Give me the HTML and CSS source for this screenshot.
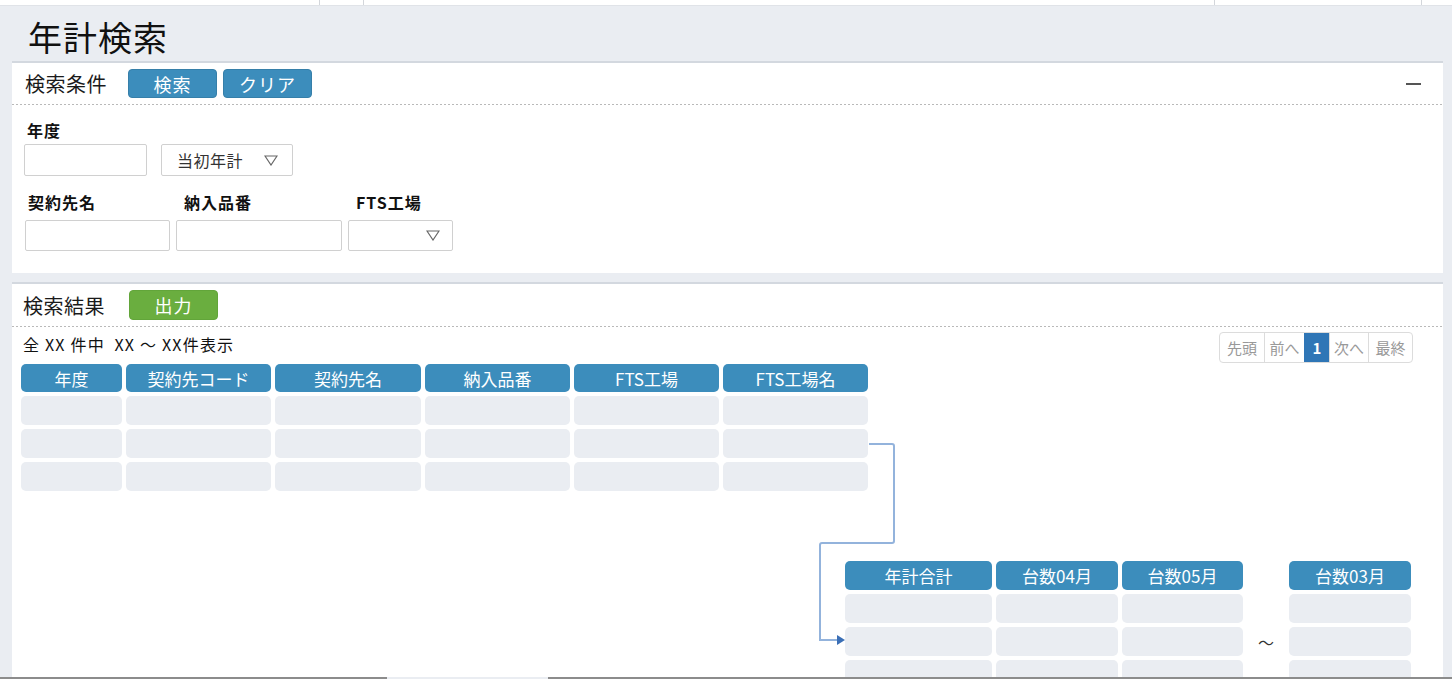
FILE: index.html
```html
<!DOCTYPE html>
<html lang="ja">
<head>
  <meta charset="UTF-8" />
  <meta name="viewport" content="width=device-width, initial-scale=1.0" />
  <title>年計検索</title>
  <link rel="stylesheet" href="styles.css">
</head>

<body>
  <div class="topbar"><span></span><span></span><span></span><span></span><span></span></div>

  <h1 class="page-title">年計検索</h1>

  <section class="panel">
    <div class="panel-head">
      <span class="panel-title">検索条件</span>
      <button class="btn btn-blue">検索</button>
      <button class="btn btn-blue">クリア</button>
      <span class="collapse"></span>
    </div>

    <div class="cond-body">
      <div class="field-label">年度</div>
      <div class="row">
        <input type="text" class="box w-year" />
        <div class="box select w-kind">
          <span>当初年計</span>
          <svg class="tri" width="14" height="11" viewBox="0 0 14 11"><polygon points="1,1 13,1 7,10" fill="none" stroke="#666" stroke-width="1.2"/></svg>
        </div>
      </div>

      <div class="row row-2">
        <div class="field">
          <div class="field-label">契約先名</div>
          <input type="text" class="box w-name" />
        </div>
        <div class="field">
          <div class="field-label indent">納入品番</div>
          <input type="text" class="box w-part" />
        </div>
        <div class="field">
          <div class="field-label indent">FTS工場</div>
          <div class="box select w-plant">
            <svg class="tri" width="14" height="11" viewBox="0 0 14 11"><polygon points="1,1 13,1 7,10" fill="none" stroke="#666" stroke-width="1.2"/></svg>
          </div>
        </div>
      </div>
    </div>
  </section>

  <section class="panel results">
    <div class="panel-head head-2">
      <span class="panel-title">検索結果</span>
      <button class="btn btn-green">出力</button>
    </div>

    <div class="toolbar">
      <span class="count">全 XX 件中&nbsp;&nbsp;XX ～ XX件表示</span>
      <div class="pager">
        <span class="w-first">先頭</span>
        <span class="w-prev">前へ</span>
        <span class="active">1</span>
        <span class="w-next">次へ</span>
        <span class="w-last">最終</span>
      </div>
    </div>

    <div class="grid grid-main">
      <div class="th">年度</div>
      <div class="th">契約先コード</div>
      <div class="th">契約先名</div>
      <div class="th">納入品番</div>
      <div class="th">FTS工場</div>
      <div class="th">FTS工場名</div>
      <div class="td"></div><div class="td"></div><div class="td"></div><div class="td"></div><div class="td"></div><div class="td"></div>
      <div class="td"></div><div class="td"></div><div class="td"></div><div class="td"></div><div class="td"></div><div class="td"></div>
      <div class="td"></div><div class="td"></div><div class="td"></div><div class="td"></div><div class="td"></div><div class="td"></div>
    </div>

    <div class="grid grid-month">
      <div class="th">年計合計</div>
      <div class="th">台数04月</div>
      <div class="th">台数05月</div>
      <div class="gap"></div>
      <div class="th">台数03月</div>
      <div class="td"></div><div class="td"></div><div class="td"></div><div class="gap"></div><div class="td"></div>
      <div class="td"></div><div class="td"></div><div class="td"></div><div class="gap tilde">～</div><div class="td"></div>
      <div class="td"></div><div class="td"></div><div class="td"></div><div class="gap"></div><div class="td"></div>
    </div>

    <!-- connector from the main table to the monthly columns -->
    <svg class="connector" width="100" height="220" viewBox="0 0 100 220">
      <path d="M69 14 H92 Q94 14 94 16 V111 Q94 113 92 113 H22 Q20 113 20 115 V210 H38" fill="none" stroke="#93b3dc" stroke-width="2"/>
      <polygon points="37,205 45,210 37,215" fill="#3b6fb6"/>
    </svg>
  </section>

  <div class="footer"><span></span><span></span></div>
</body>
</html>
```

FILE: styles.css
```css
body {
  margin: 0;
  height: 679px;
  display: flex;
  flex-direction: column;
  background: #eaedf2;
  font-family: "Noto Sans CJK JP", "Noto Sans", sans-serif;
  color: #1a1a1a;
  overflow: hidden;
}

.topbar {
  flex: none;
  display: grid;
  grid-template-columns: 320px 44px 851px 207px 1fr;
  height: 5px;
  background: #fff;
  border-bottom: 1px solid #e0e3e8;
}

.topbar span {
  border-right: 1px solid #d3d6db;
}

.topbar span:last-child {
  border-right: none;
}

.page-title {
  flex: none;
  margin: 0;
  padding: 7px 0 0 28px;
  height: 48px;
  line-height: 48px;
  font-size: 34px;
  font-weight: normal;
  letter-spacing: 1px;
  color: #111;
}

.panel {
  flex: none;
  background: #fff;
  border-top: 2px solid #d3d8df;
  margin: 0 9px 0 12px;
}

.panel-head {
  display: flex;
  align-items: center;
  height: 42px;
  box-sizing: border-box;
  padding: 0 22px 1px 13px;
  background: linear-gradient(to right, #b9b9b9 50%, transparent 50%) left bottom / 4px 1px repeat-x;
}

.panel-title {
  font-size: 20px;
  letter-spacing: 0.5px;
  margin-right: 21px;
}

.btn {
  width: 89px;
  height: 29px;
  padding: 0;
  margin-right: 6px;
  border: 1px solid #367fa9;
  border-radius: 4px;
  color: #fff;
  font-family: inherit;
  font-size: 18px;
  letter-spacing: 1px;
  cursor: pointer;
}

.btn-blue {
  background: #3c8dbc;
}

.btn-green {
  height: 30px;
  background: #6aae3f;
  border-color: #62a53a;
}

.collapse {
  margin-left: auto;
  width: 15px;
  height: 2px;
  background: #555;
}

.cond-body {
  padding: 15px 0 22px 12px;
}

.field-label {
  font-size: 16px;
  font-weight: bold;
  line-height: 20px;
  letter-spacing: 1px;
  padding-left: 3px;
  margin-bottom: 4px;
  color: #111;
}

.field-label.indent {
  padding-left: 8px;
}

.row {
  display: flex;
  gap: 14px;
}

.box {
  height: 32px;
  box-sizing: border-box;
  border: 1px solid #d0d0d0;
  border-radius: 2px;
  background: #fff;
  margin: 0;
  font-family: inherit;
}

.select {
  display: flex;
  align-items: center;
  justify-content: space-between;
  padding: 0 14px 0 15px;
  font-size: 16px;
  letter-spacing: 0.5px;
  color: #333;
}

.w-year {
  width: 123px;
}

.w-kind {
  width: 132px;
}

.row-2 {
  margin-top: 16px;
  gap: 6px;
  padding-left: 1px;
}

.row-2 .field-label {
  margin-bottom: 8px;
}

.row-2 .box {
  height: 31px;
}

.w-name {
  width: 145px;
}

.w-part {
  width: 166px;
}

.w-plant {
  width: 105px;
  justify-content: flex-end;
  padding-right: 12px;
}

.results {
  flex: 1;
  min-height: 0;
  margin-top: 9px;
  overflow: hidden;
  position: relative;
}

.head-2 {
  height: 43px;
  padding-left: 11px;
}

.head-2 .panel-title {
  margin-right: 24px;
}

.toolbar {
  display: flex;
  justify-content: space-between;
  align-items: flex-start;
  padding: 5px 30px 0 11px;
  height: 31px;
}

.count {
  font-size: 16px;
  line-height: 24px;
  letter-spacing: 1.2px;
  color: #111;
}

.pager {
  display: flex;
  height: 31px;
  box-sizing: border-box;
  border: 1px solid #dcdcdc;
  border-radius: 4px;
  overflow: hidden;
}

.pager span {
  display: flex;
  align-items: center;
  justify-content: center;
  box-sizing: border-box;
  border-left: 1px solid #dcdcdc;
  font-size: 15px;
  color: #999;
}

.pager span:first-child {
  border-left: none;
}

.pager .w-first,
.pager .w-last {
  width: 44px;
}

.pager .w-prev {
  width: 40px;
}

.pager .w-next {
  width: 39px;
}

.pager .active {
  width: 25px;
  background: #2f76b6;
  border-color: #2f76b6;
  color: #fff;
  font-weight: bold;
}

.grid {
  display: grid;
  gap: 4px;
}

.grid-main {
  margin: 1px 0 0 9px;
  grid-template-columns: 101px 145px 146px 145px 145px 145px;
  grid-template-rows: 28px 29px 29px 29px;
}

.grid-month {
  margin: 70px 0 0 833px;
  grid-template-columns: 147px 122px 121px 38px 122px;
  grid-template-rows: repeat(4, 29px);
}

.th {
  display: flex;
  align-items: center;
  justify-content: center;
  background: #3c8dbc;
  border-radius: 5px;
  color: #fff;
  font-size: 17px;
}

.td {
  background: #eaedf2;
  border-radius: 5px;
}

.tilde {
  display: flex;
  align-items: center;
  justify-content: center;
  font-size: 16px;
  color: #333;
}

.connector {
  position: absolute;
  left: 788px;
  top: 146px;
}

.footer {
  flex: none;
  display: flex;
  height: 2px;
}

.footer span:first-child {
  width: 387px;
  background: #8c8c8c;
}

.footer span:last-child {
  flex: 1;
  margin-left: 161px;
  background: #8c8c8c;
}
```
